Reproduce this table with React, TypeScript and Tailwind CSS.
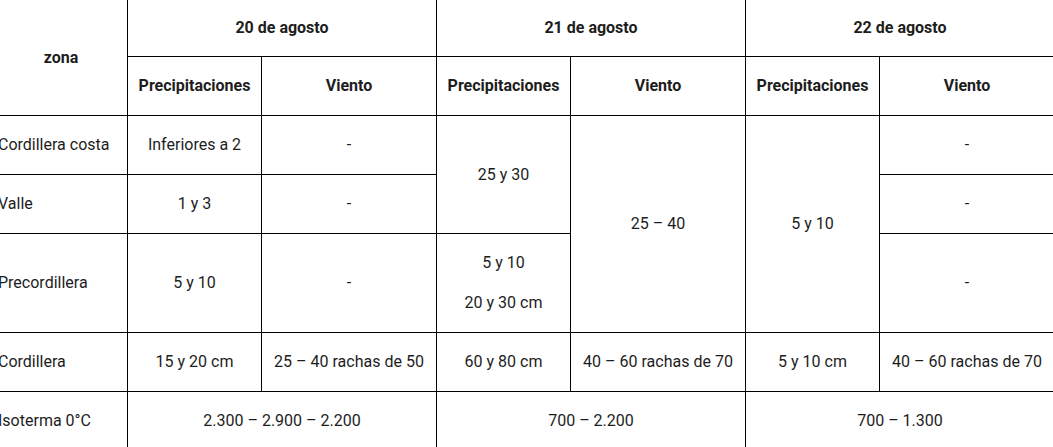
import React from "react";

const cell = "border border-black text-center align-middle px-2";

export default function App() {
  return (
    <div
      className="w-[1053px] h-[447px] overflow-hidden bg-white text-[#1d1d1d] text-[16px]"
      style={{ fontFamily: "Roboto, 'Liberation Sans', sans-serif" }}
    >
      <table className="border-collapse table-fixed -ml-[6px] -mt-px w-[1060px]">
        <colgroup>
          <col className="w-[133px]" />
          <col className="w-[134px]" />
          <col className="w-[175px]" />
          <col className="w-[134px]" />
          <col className="w-[175px]" />
          <col className="w-[134px]" />
          <col className="w-[175px]" />
        </colgroup>
        <thead className="font-bold">
          <tr className="h-[57px]">
            <th rowSpan={2} className={cell}>zona</th>
            <th colSpan={2} className={cell}>20 de agosto</th>
            <th colSpan={2} className={cell}>21 de agosto</th>
            <th colSpan={2} className={cell}>22 de agosto</th>
          </tr>
          <tr className="h-[59px]">
            <th className={cell}>Precipitaciones</th>
            <th className={cell}>Viento</th>
            <th className={cell}>Precipitaciones</th>
            <th className={cell}>Viento</th>
            <th className={cell}>Precipitaciones</th>
            <th className={cell}>Viento</th>
          </tr>
        </thead>
        <tbody>
          <tr className="h-[59px]">
            <td className={`${cell} text-left whitespace-nowrap pl-[3px]`}>Cordillera costa</td>
            <td className={cell}>Inferiores a 2</td>
            <td className={cell}>-</td>
            <td rowSpan={2} className={cell}>25 y 30</td>
            <td rowSpan={3} className={cell}>25 – 40</td>
            <td rowSpan={3} className={cell}>5 y 10</td>
            <td className={cell}>-</td>
          </tr>
          <tr className="h-[59px]">
            <td className={`${cell} text-left pl-[3px]`}>Valle</td>
            <td className={cell}>1 y 3</td>
            <td className={cell}>-</td>
            <td className={cell}>-</td>
          </tr>
          <tr className="h-[99px]">
            <td className={`${cell} text-left pl-[3px]`}>Precordillera</td>
            <td className={cell}>5 y 10</td>
            <td className={cell}>-</td>
            <td className={cell}>
              <p className="leading-[22px]">5 y 10</p>
              <p className="leading-[22px] mt-[18px]">20 y 30 cm</p>
            </td>
            <td className={cell}>-</td>
          </tr>
          <tr className="h-[59px]">
            <td className={`${cell} text-left pl-[3px]`}>Cordillera</td>
            <td className={cell}>15 y 20 cm</td>
            <td className={`${cell} whitespace-nowrap`}>25 – 40 rachas de 50</td>
            <td className={cell}>60 y 80 cm</td>
            <td className={`${cell} whitespace-nowrap`}>40 – 60 rachas de 70</td>
            <td className={cell}>5 y 10 cm</td>
            <td className={`${cell} whitespace-nowrap`}>40 – 60 rachas de 70</td>
          </tr>
          <tr className="h-[59px]">
            <td className={`${cell} text-left pl-[3px]`}>Isoterma 0°C</td>
            <td colSpan={2} className={cell}>2.300 – 2.900 – 2.200</td>
            <td colSpan={2} className={cell}>700 – 2.200</td>
            <td colSpan={2} className={cell}>700 – 1.300</td>
          </tr>
        </tbody>
      </table>
    </div>
  );
}
